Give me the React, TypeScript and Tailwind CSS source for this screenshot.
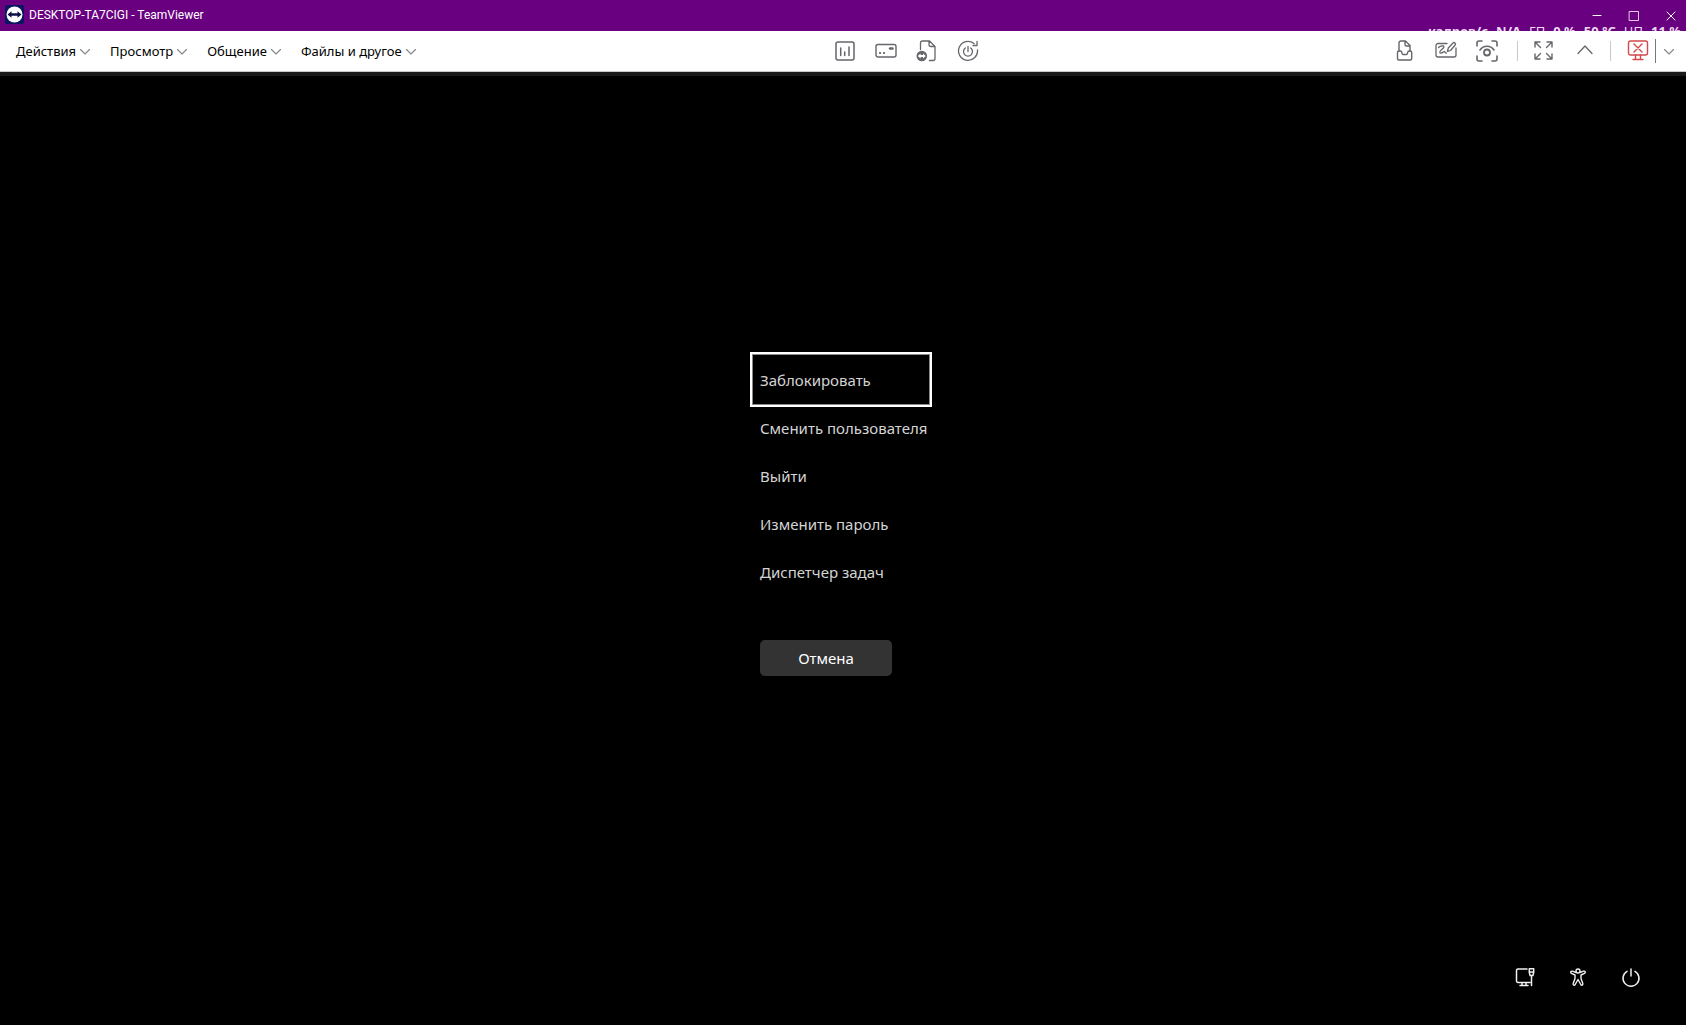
import React from "react";

type P = { children: React.ReactNode; w: number; h: number; className?: string; sw?: number };

const Svg = ({ children, w, h, className = "", sw = 1.3 }: P) => (
  <svg width={w} height={h} viewBox={`0 0 ${w} ${h}`} fill="none" stroke="currentColor" strokeWidth={sw} strokeLinecap="round" strokeLinejoin="round" className={`shrink-0 ${className}`} aria-hidden="true">
    {children}
  </svg>
);

const ChevronDown = () => (
  <Svg w={12} h={8} sw={1.1} className="text-[#85858a]">
    <path d="M1.500 2.500 6 7 10.500 2.500" />
  </Svg>
);

const IconButton = ({ label, children }: { label: string; children: React.ReactNode }) => (
  <button type="button" aria-label={label} className="flex size-[22px] shrink-0 items-center justify-center">
    {children}
  </button>
);

const menus = ["Действия", "Просмотр", "Общение", "Файлы и другое"];
const options = ["Сменить пользователя", "Выйти", "Изменить пароль", "Диспетчер задач"];

const TitleBar = () => (
  <header className="relative flex h-[31px] shrink-0 items-center justify-between overflow-hidden bg-[#680080] text-white">
    <div className="flex items-center gap-[5px] pb-[2px] pl-[5px]">
      <svg width="19" height="19" viewBox="0 0 19 19" aria-hidden="true">
        <rect width="19" height="19" rx="2" fill="#0b1560" />
        <circle cx="9.500" cy="9.500" r="8" fill="#fff" />
        <path d="M2.500 9.500 6.500 6.300v2h6v-2l4 3.200-4 3.200v-2h-6v2z" fill="#0b1044" />
      </svg>
      <h1 className="font-[Roboto,sans-serif] text-[12px] leading-[16px] whitespace-nowrap">DESKTOP-TA7CIGI - TeamViewer</h1>
    </div>
    <div className="flex items-center gap-[26px] pr-[10px] pb-px">
      <button type="button" aria-label="Свернуть">
        <Svg w={11} h={11} sw={1}><path d="M2 5.500h8" /></Svg>
      </button>
      <button type="button" aria-label="Развернуть">
        <Svg w={11} h={11} sw={0.8}><path d="M1.500 1.500h9v9h-9z" /></Svg>
      </button>
      <button type="button" aria-label="Закрыть">
        <Svg w={11} h={11} sw={1}><path d="m2 2 8 8m0-8-8 8" /></Svg>
      </button>
    </div>
    <div className="absolute top-[23px] right-[5px] flex gap-[8px] text-[13px] leading-[16px] font-bold whitespace-nowrap text-[#efd9f3]">
      <span>кадров/с</span>
      <span>N/A</span>
      <span className="font-normal">ГП</span>
      <span>0 %</span>
      <span>50 °C</span>
      <span className="font-normal">ЦП</span>
      <span>11 %</span>
    </div>
  </header>
);

const Toolbar = () => (
  <nav aria-label="Панель инструментов" className="flex h-[41px] shrink-0 items-center justify-between border-b border-[#c8caca] bg-white pr-[11px] pl-[16px] text-[#66666b]">
    <div className="flex items-center gap-[19px]">
      {menus.map((m) => (
        <button type="button" key={m} className="flex items-center gap-[3px] text-[13px] leading-[20px] whitespace-nowrap text-black">
          {m}
          <ChevronDown />
        </button>
      ))}
    </div>
    <div className="flex items-center gap-[19px] pl-[2px]">
      <IconButton label="Статистика">
        <Svg w={22} h={22} sw={1.5}>
          <rect x="2" y="2" width="18" height="18" rx="2" />
          <path d="M6.700 8v7.500M10.700 12v3.500M15 7v8.500" />
        </Svg>
      </IconButton>
      <IconButton label="Панель">
        <Svg w={22} h={22} sw={1.4}>
          <rect x="1" y="4.500" width="20" height="12.500" rx="2" />
          <path d="M15 8.500h2.500" strokeWidth="2.400" />
          <path d="M5 13h.1M9 13h.1" strokeWidth="2.200" />
        </Svg>
      </IconButton>
      <IconButton label="Передача файлов">
        <Svg w={22} h={22} sw={1.3}>
          <path d="M4.500 9.500V3a2 2 0 0 1 2-2h7L19 6.500v12a2 2 0 0 1-2 2h-3.500M13 1v3.500a2 2 0 0 0 2 2h4" />
          <circle cx="5.800" cy="16" r="5.300" fill="currentColor" stroke="none" />
          <path d="M1.800 16 4.600 13.500V15h2.400v-1.500L9.800 16 7 18.500V17H4.600v1.500z" fill="#fff" stroke="none" />
        </Svg>
      </IconButton>
      <IconButton label="Перезагрузка">
        <Svg w={22} h={22} sw={1.3}>
          <path d="M17 3.500A9.500 9.500 0 1 0 20.500 10M20 1.500V5.500h-4" />
          <path d="M11 6.500v5M8.300 8a4.500 4.500 0 1 0 5.400 0" />
        </Svg>
      </IconButton>
    </div>
    <div className="flex items-center">
      <div className="flex items-center gap-[19px]">
        <IconButton label="Файлы">
          <Svg w={22} h={22} sw={1.4}>
            <path d="M5 11V3a2 2 0 0 1 2-2h4.500L16 5.500V11M11 1v3.500a1.500 1.500 0 0 0 1.500 1.500H16" />
            <path d="M3.500 12.500a1.500 1.500 0 0 1 1.500-1.500h1.500q1 0 1.200 1l.4 1.500q.3 1 1.300 1h2.700q1 0 1.300-1l.4-1.500q.2-1 1.200-1h1.200a1.500 1.500 0 0 1 1.500 1.500v6a1.500 1.500 0 0 1-1.500 1.500H5a1.500 1.500 0 0 1-1.500-1.500z" />
          </Svg>
        </IconButton>
        <IconButton label="Доска">
          <Svg w={22} h={22} sw={1.3}>
            <path d="M12 3.500H3a2 2 0 0 0-2 2V15a2 2 0 0 0 2 2h16a2 2 0 0 0 2-2V8" />
            <path d="M3.500 7.500c2-2 6-2.500 5.300-.3C8.200 9.200 4.300 10.500 4.800 12.500c.6 1.800 3.200-.5 4.500-1 1 .2 0 1.800 2 1.500" />
            <path d="m12.500 11.500.8-3.500L18 3c1.200-1.200 3.400.3 2.200 2L15.500 10.500z" />
          </Svg>
        </IconButton>
        <IconButton label="Снимок экрана">
          <Svg w={22} h={22} sw={1.6}>
            <path d="M1 6V3a2 2 0 0 1 2-2h3M16 1h3a2 2 0 0 1 2 2v3M21 16v3a2 2 0 0 1-2 2h-3M6 21H3a2 2 0 0 1-2-2v-3" />
            <path d="M4 10c3.500-5 10.500-5 14 0" />
            <circle cx="11" cy="12.500" r="3" strokeWidth="1.800" />
          </Svg>
        </IconButton>
      </div>
      <span className="mr-[15px] ml-[19px] h-[20px] w-px bg-[#c9c9cd]" />
      <div className="flex items-center gap-[19px]">
        <IconButton label="Во весь экран">
          <Svg w={22} h={22} sw={1.4}>
            <path d="M2 7V2h5M2 2l5.500 5.500M14 2h5v5m0-5-5.500 5.500M19 14v5h-5m5 0-5.500-5.500M7 19H2v-5m0 5 5.500-5.500" />
          </Svg>
        </IconButton>
        <IconButton label="Свернуть панель">
          <Svg w={22} h={22} sw={1.3}>
            <path d="m4 13.500 7-7.500 7 7.500" />
          </Svg>
        </IconButton>
      </div>
      <span className="mr-[16px] ml-[14px] h-[20px] w-px bg-[#c9c9cd]" />
      <div className="flex items-center gap-[6px]">
        <IconButton label="Завершить сеанс">
          <Svg w={22} h={22} sw={1.4} className="text-[#d2484c]">
            <rect x="1.500" y="1" width="19" height="14" rx="2" />
            <path d="m7 4 8 8m0-8-8 8M8.500 15v4M13.500 15v4M6 19.500h10" />
          </Svg>
        </IconButton>
        <span className="h-[24px] w-px bg-[#77777b]" />
        <button type="button" aria-label="Другие действия" className="flex h-[22px] items-center pl-px">
          <ChevronDown />
        </button>
      </div>
    </div>
  </nav>
);

export default function App() {
  return (
    <div className="flex min-h-screen flex-col bg-black font-['Noto_Sans',sans-serif]">
      <TitleBar />
      <Toolbar />
      <main className="flex grow flex-col border-t-4 border-[#191919] pr-[4px]">
        <section aria-label="Параметры безопасности" className="mx-auto mt-[276px] flex w-[182px] flex-col text-[15px] leading-[20px] whitespace-nowrap text-[#d4d4d4]">
          <button type="button" className="flex h-[55px] items-center border-2 border-white px-[8px] text-left shadow-[inset_0_0_0_1px_#8a8a8a]">
            Заблокировать
          </button>
          <div className="-mt-[3px] flex flex-col">
            {options.map((o) => (
              <button type="button" key={o} className="flex h-[48px] items-center px-[10px] text-left">
                {o}
              </button>
            ))}
          </div>
          <button type="button" className="mt-[44px] ml-[10px] h-[36px] w-[132px] rounded-[5px] bg-[#333333] text-white">
            Отмена
          </button>
        </section>
        <footer className="mt-auto flex justify-end gap-[31px] pr-[40px] pb-[36px] text-[#f0f0f0]">
          <button type="button" aria-label="Сеть">
            <Svg w={22} h={22} sw={1.5}>
              <path d="M13 2H4a1.500 1.500 0 0 0-1.500 1.500v10.500a1.500 1.500 0 0 0 1.500 1.500h12M8 15.500v3M12 15.500v3M6 18.500h8M17.500 9v9.500" />
              <path d="M15.300 1.800h4.400v3.700l-.8 3h-2.800l-.8-3zM15.300 5h4.400" />
            </Svg>
          </button>
          <button type="button" aria-label="Специальные возможности">
            <Svg w={22} h={22} sw={1.4}>
              <circle cx="11" cy="4" r="2" />
              <path d="M9 5.500 5.500 4.200c-1.800-.5-2.500 1.500-1 2.200L8 8v3.500l-1.800 5c-.5 1.800 1.400 2.400 2 1L11 12.500l2.800 5c.6 1.400 2.500.8 2-1l-1.800-5V8l3.500-1.600c1.500-.7.8-2.700-1-2.200L13 5.500" />
            </Svg>
          </button>
          <button type="button" aria-label="Выключение">
            <Svg w={22} h={22} sw={1.5}>
              <path d="M11 2v7M7 4.300a8 8 0 1 0 8 0" />
            </Svg>
          </button>
        </footer>
      </main>
    </div>
  );
}
